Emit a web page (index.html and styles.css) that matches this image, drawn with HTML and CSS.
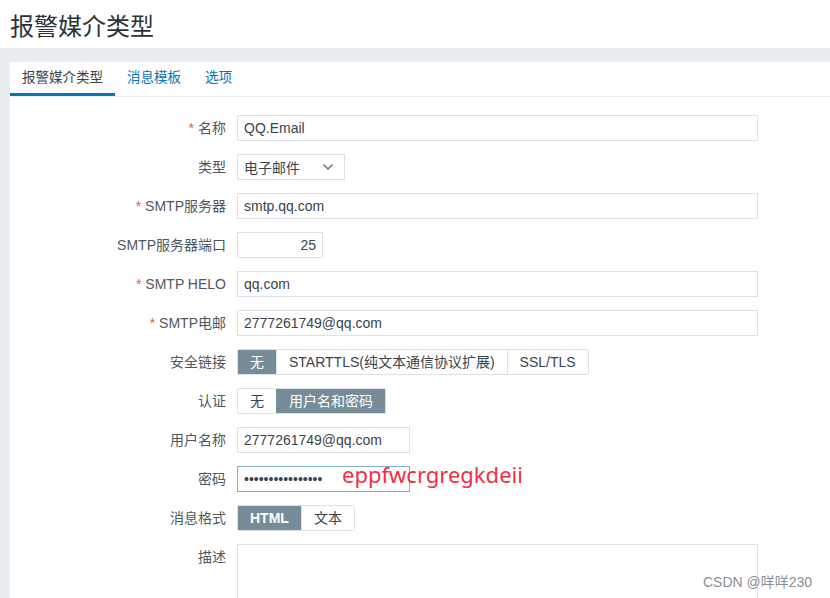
FILE: index.html
```html
<!DOCTYPE html>
<html>
<head>
  <meta charset="utf-8">
  <title>报警媒介类型</title>
  <link rel="stylesheet" href="styles.css">
</head>
<body>

<header class="page-header">
  <h1>报警媒介类型</h1>
</header>

<main class="wrapper">
  <div class="panel">

    <ul class="tabs">
      <li class="tab active">报警媒介类型</li>
      <li class="tab">消息模板</li>
      <li class="tab">选项</li>
    </ul>

    <form class="form">

      <label class="form-label"><span class="req">*</span>名称</label>
      <div class="form-field"><input class="text wide" type="text" value="QQ.Email"></div>

      <label class="form-label">类型</label>
      <div class="form-field">
        <div class="select">
          <span>电子邮件</span>
          <svg width="12" height="8" viewBox="0 0 12 8"><path d="M1.5 1.5 L6 6 L10.5 1.5" fill="none" stroke="#5d6b73" stroke-width="1.3"/></svg>
        </div>
      </div>

      <label class="form-label"><span class="req">*</span>SMTP服务器</label>
      <div class="form-field"><input class="text wide" type="text" value="smtp.qq.com"></div>

      <label class="form-label">SMTP服务器端口</label>
      <div class="form-field"><input class="text port" type="text" value="25"></div>

      <label class="form-label"><span class="req">*</span>SMTP HELO</label>
      <div class="form-field"><input class="text wide" type="text" value="qq.com"></div>

      <label class="form-label"><span class="req">*</span>SMTP电邮</label>
      <div class="form-field"><input class="text wide" type="text" value="2777261749@qq.com"></div>

      <label class="form-label">安全链接</label>
      <div class="form-field">
        <div class="radio-group">
          <span class="radio on">无</span>
          <span class="radio">STARTTLS(纯文本通信协议扩展)</span>
          <span class="radio">SSL/TLS</span>
        </div>
      </div>

      <label class="form-label">认证</label>
      <div class="form-field">
        <div class="radio-group">
          <span class="radio">无</span>
          <span class="radio on">用户名和密码</span>
        </div>
      </div>

      <label class="form-label">用户名称</label>
      <div class="form-field"><input class="text medium" type="text" value="2777261749@qq.com"></div>

      <label class="form-label">密码</label>
      <div class="form-field password-field">
        <input class="text medium focused" type="password" value="eppfwcrgregkdeii">
        <span class="note">eppfwcrgregkdeii</span>
      </div>

      <label class="form-label">消息格式</label>
      <div class="form-field">
        <div class="radio-group">
          <span class="radio on bold">HTML</span>
          <span class="radio">文本</span>
        </div>
      </div>

      <label class="form-label">描述</label>
      <div class="form-field"><textarea class="text wide area"></textarea></div>

    </form>
  </div>
</main>

<div class="watermark">CSDN @咩咩230</div>

</body>
</html>
```

FILE: styles.css
```css
html, body {
  margin: 0;
  height: 100%;
  overflow: hidden;
}

body {
  display: flex;
  flex-direction: column;
  font-family: "Liberation Sans", "Noto Sans CJK SC", sans-serif;
  font-size: 14px;
  color: #1f2c33;
  background-color: #ebeef0;
}

.page-header {
  flex: none;
  background-color: #fff;
  height: 48px;
  padding-left: 10px;
  display: flex;
  align-items: center;
}

.page-header h1 {
  margin: 0;
  font-size: 24px;
  font-weight: normal;
  color: #2b3338;
}

.wrapper {
  flex: 1;
  min-height: 0;
  display: flex;
  padding: 14px 0 0 10px;
}

.panel {
  flex: 1;
  background-color: #fff;
  overflow: hidden;
}

.tabs {
  list-style: none;
  margin: 0;
  padding: 0;
  display: flex;
  border-bottom: 1px solid #ebeef0;
}

.tab {
  font-size: 13.5px;
  padding: 0 12px;
  height: 31px;
  line-height: 31px;
  color: #0275b8;
  border-bottom: 3px solid transparent;
}

.tab.active {
  color: #3a4449;
  border-bottom-color: #0275b8;
}

.form {
  display: grid;
  grid-template-columns: 216px 1fr;
  grid-auto-rows: 26px;
  column-gap: 11px;
  row-gap: 13px;
  padding-top: 18px;
}

.form-label {
  text-align: right;
  line-height: 26px;
  color: #50585d;
}

.req {
  color: #e45959;
  margin-right: 4px;
}

.form-field {
  display: flex;
  align-items: flex-start;
}

.text {
  box-sizing: border-box;
  height: 26px;
  margin: 0;
  padding: 0 6px;
  border: 1px solid #dce2e5;
  background-color: #fff;
  font-family: "Liberation Sans", "Noto Sans CJK SC", sans-serif;
  font-size: 14px;
  color: #3a4449;
  outline: none;
}

.wide {
  width: 521px;
}

.medium {
  width: 173px;
}

.port {
  width: 86px;
  text-align: right;
}

.focused {
  border-color: #7fb0d4;
}

.area {
  height: 90px;
  resize: none;
}

.select {
  box-sizing: border-box;
  width: 108px;
  height: 26px;
  padding: 0 10px 0 6px;
  border: 1px solid #dce2e5;
  display: flex;
  align-items: center;
  justify-content: space-between;
  color: #3a4449;
}

.radio-group {
  box-sizing: border-box;
  display: flex;
  border: 1px solid #dce2e5;
  border-radius: 2px;
  height: 26px;
}

.radio {
  padding: 0 12px;
  line-height: 24px;
  color: #3a4449;
  border-left: 1px solid #dce2e5;
}

.radio:first-child {
  border-left: none;
}

.radio.on {
  background-color: #768d99;
  color: #fff;
  border-left-color: #768d99;
}

.radio.bold {
  font-weight: bold;
}

.password-field {
  position: relative;
}

.note {
  position: absolute;
  left: 105px;
  top: -7px;
  font-family: "Noto Sans", "Noto Sans CJK SC", sans-serif;
  font-size: 22px;
  color: #f03040;
}

.watermark {
  position: absolute;
  left: 703px;
  top: 571px;
  font-size: 14px;
  color: #8a8f93;
}
```
